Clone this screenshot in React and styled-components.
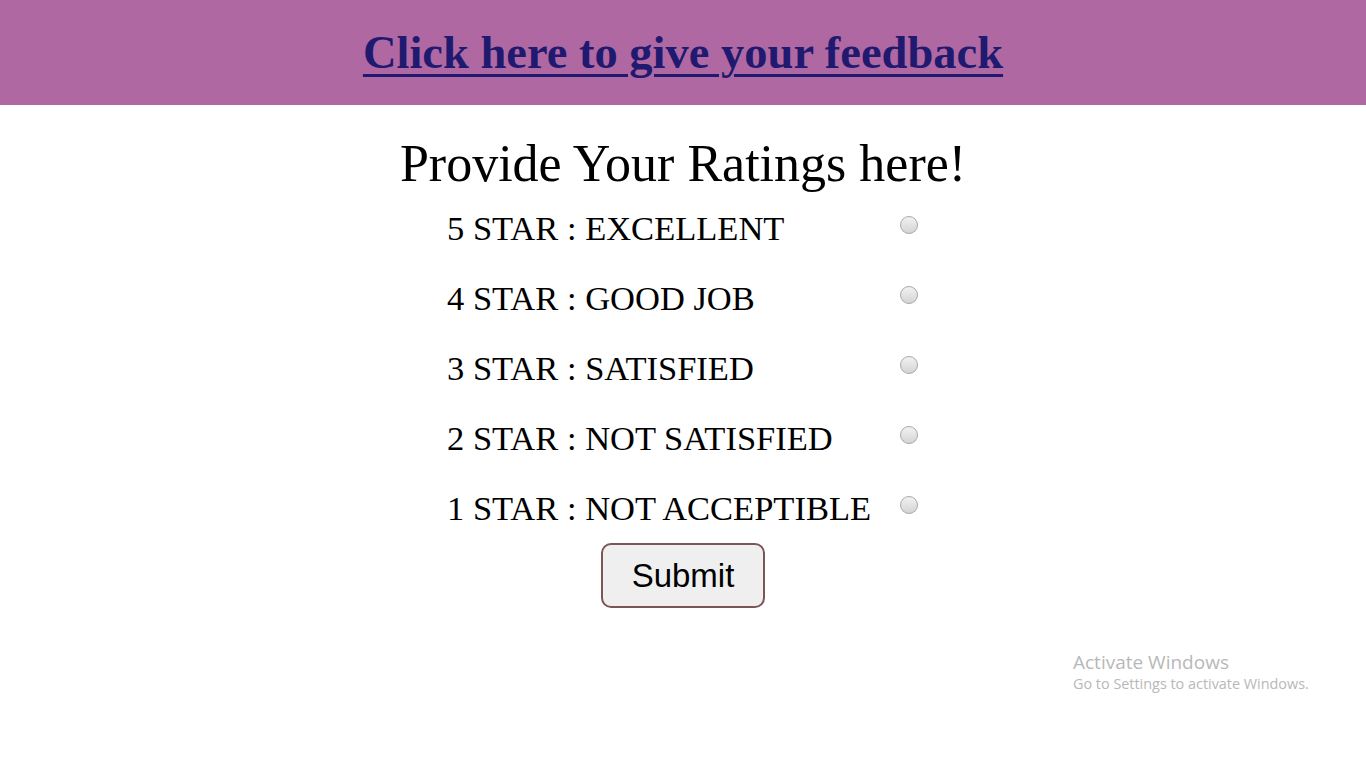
import styled, { createGlobalStyle } from 'styled-components';

const GlobalStyle = createGlobalStyle`
  html, body {
    margin: 0;
    padding: 0;
    background: #ffffff;
  }
  body {
    font-family: "Liberation Serif", "Times New Roman", serif;
    color: #000;
  }
`;

const ratings = [
  { value: 5, label: '5 STAR : EXCELLENT' },
  { value: 4, label: '4 STAR : GOOD JOB' },
  { value: 3, label: '3 STAR : SATISFIED' },
  { value: 2, label: '2 STAR : NOT SATISFIED' },
  { value: 1, label: '1 STAR : NOT ACCEPTIBLE' },
];

export default function App() {
  return (
    <Page>
      <GlobalStyle />
      <Banner>
        <FeedbackLink href="#feedback">Click here to give your feedback</FeedbackLink>
      </Banner>
      <Main>
        <Heading>Provide Your Ratings here!</Heading>
        <RatingTable>
          {ratings.map((r) => (
            <Row key={r.value}>
              <Label htmlFor={`star${r.value}`}>{r.label}</Label>
              <Radio type="radio" name="rating" id={`star${r.value}`} value={r.value} />
            </Row>
          ))}
        </RatingTable>
        <SubmitButton type="button">Submit</SubmitButton>
      </Main>
      <Watermark>
        <div className="title">Activate Windows</div>
        <div className="sub">Go to Settings to activate Windows.</div>
      </Watermark>
    </Page>
  );
}

const Page = styled.div`
  position: relative;
  min-height: 768px;
`;

const Banner = styled.header`
  height: 105px;
  background: #b068a2;
  display: flex;
  align-items: center;
  justify-content: center;
`;

const FeedbackLink = styled.a`
  font-size: 46.5px;
  font-weight: bold;
  color: #1f1a70;
  text-decoration: underline;
  text-decoration-thickness: 3px;
  text-underline-offset: 6px;
`;

const Main = styled.main`
  display: flex;
  flex-direction: column;
  align-items: center;
`;

const Heading = styled.h1`
  margin: 32px 0 0;
  font-size: 52px;
  font-weight: normal;
  line-height: 54px;
`;

const RatingTable = styled.div`
  display: grid;
  grid-template-columns: 440px 32px;
  grid-auto-rows: 70px;
  margin-top: 2px;
`;

const Row = styled.div`
  display: contents;
`;

const Label = styled.label`
  font-size: 34.5px;
  display: flex;
  align-items: center;
`;

const Radio = styled.input`
  appearance: none;
  width: 18px;
  height: 18px;
  margin: 0 0 0 13px;
  align-self: center;
  transform: translateY(-3px);
  border-radius: 50%;
  border: 1px solid #a8a8a8;
  background: linear-gradient(#f2f2f2, #d4d4d4);
`;

const SubmitButton = styled.button`
  margin-top: 0;
  width: 164px;
  height: 65px;
  font-family: "Liberation Sans", Arial, sans-serif;
  font-size: 33px;
  color: #000;
  background: #efefef;
  border: 2px solid #7a5656;
  border-radius: 10px;
`;

const Watermark = styled.div`
  position: absolute;
  left: 1073px;
  top: 650px;
  font-family: "Open Sans", "Noto Sans", sans-serif;
  color: #b8b8b8;
  .title {
    font-size: 19px;
    line-height: 24px;
  }
  .sub {
    font-size: 14.4px;
    line-height: 20px;
  }
`;
